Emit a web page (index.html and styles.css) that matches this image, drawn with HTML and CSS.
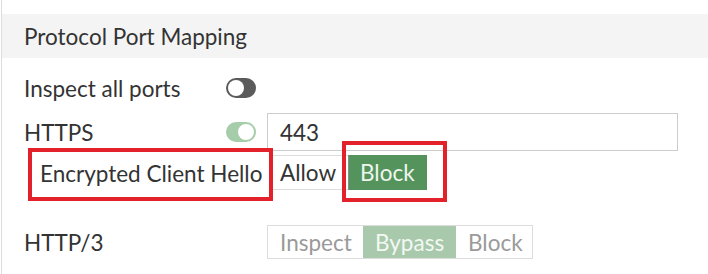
FILE: index.html
```html
<!DOCTYPE html>
<html>
<head>
<meta charset="utf-8">
<link rel="stylesheet" href="styles.css">
</head>
<body>
<div class="panel">
  <div class="header">Protocol Port Mapping</div>
  <div class="rows">
    <div class="row row-inspect">
      <div class="label">Inspect all ports</div>
      <span class="toggle toggle-off"><span class="knob"></span></span>
    </div>
    <div class="row row-https">
      <div class="label">HTTPS</div>
      <span class="toggle toggle-on"><span class="knob"></span></span>
      <div class="input">443</div>
    </div>
    <div class="row row-ech">
      <div class="ech-label">Encrypted Client Hello</div>
      <div class="btn-group ech-group">
        <span class="btn btn-allow">Allow</span>
        <span class="btn btn-block-active">Block</span>
      </div>
    </div>
    <div class="row row-http3">
      <div class="label label-wide">HTTP/3</div>
      <div class="btn-group h3-group">
        <span class="btn h3-btn h3-inspect">Inspect</span>
        <span class="btn h3-btn h3-bypass">Bypass</span>
        <span class="btn h3-btn h3-block">Block</span>
      </div>
    </div>
  </div>
</div>
</body>
</html>
```
FILE: styles.css
```css
html, body {
  margin: 0;
  padding: 0;
  background: #ffffff;
}
body {
  width: 708px;
  height: 274px;
  overflow: hidden;
  font-family: Lato, "Open Sans", sans-serif;
  font-size: 22.5px;
  color: #333333;
}
.panel {
  margin-left: 1px;
  border-left: 1px solid #dddddd;
  height: 274px;
  padding-top: 14px;
  box-sizing: border-box;
}
.header {
  height: 44px;
  background: #f4f4f4;
  display: flex;
  align-items: center;
  padding-left: 22px;
  color: #333333;
}
.rows {
  padding-left: 22px;
  display: flex;
  flex-direction: column;
}
.row {
  display: flex;
  align-items: center;
}
.label {
  width: 202px;
  flex: none;
}
.label-wide {
  width: 243px;
}
.row-inspect {
  height: 40px;
  margin-top: 10px;
}
.row-https {
  height: 38px;
  margin-top: 5px;
}
.toggle {
  flex: none;
  width: 30px;
  height: 20px;
  border-radius: 10px;
  position: relative;
  box-sizing: border-box;
}
.toggle-off {
  background: #5b5b5b;
}
.toggle-on {
  background: #a6cdaa;
}
.knob {
  position: absolute;
  top: 2px;
  width: 16px;
  height: 16px;
  border-radius: 50%;
  background: #ffffff;
}
.toggle-off .knob {
  left: 2px;
}
.toggle-on .knob {
  right: 2px;
}
.input {
  margin-left: 11px;
  width: 411px;
  height: 38px;
  box-sizing: border-box;
  border: 1px solid #cccccc;
  display: flex;
  align-items: center;
  padding-left: 12px;
}
.row-ech {
  margin-top: -3px;
  align-items: flex-start;
}
.ech-label {
  margin-left: 4px;
  width: 245px;
  height: 53px;
  box-sizing: border-box;
  border: 4px solid #e3212b;
  display: flex;
  align-items: center;
  padding-left: 8px;
  padding-bottom: 2px;
  flex: none;
  white-space: nowrap;
}
.btn-group {
  display: flex;
}
.ech-group {
  margin-top: 7px;
  height: 35px;
}
.btn {
  display: flex;
  align-items: center;
  box-sizing: border-box;
  white-space: nowrap;
}
.btn-allow {
  width: 75px;
  padding-left: 7px;
  border-top: 1px solid #dddddd;
  border-bottom: 1px solid #dddddd;
}
.btn-block-active {
  position: relative;
  width: 79px;
  padding-left: 11px;
  background: #54935b;
  color: #eef6ee;
  border-left: 1px solid #8a8a8a;
}
.btn-block-active::after {
  content: "";
  position: absolute;
  left: -7px;
  right: -20px;
  top: -14px;
  bottom: -12px;
  border: 4px solid #e3212b;
}
.row-http3 {
  margin-top: 24px;
}
.h3-group {
  height: 34px;
  border: 1px solid #dddddd;
  box-sizing: border-box;
}
.h3-btn {
  padding-left: 12px;
  color: #9a9a9a;
}
.h3-inspect {
  width: 95px;
}
.h3-bypass {
  width: 93px;
  background: #a8c9ab;
  color: #f3f8f3;
}
.h3-block {
  width: 76px;
}
```
